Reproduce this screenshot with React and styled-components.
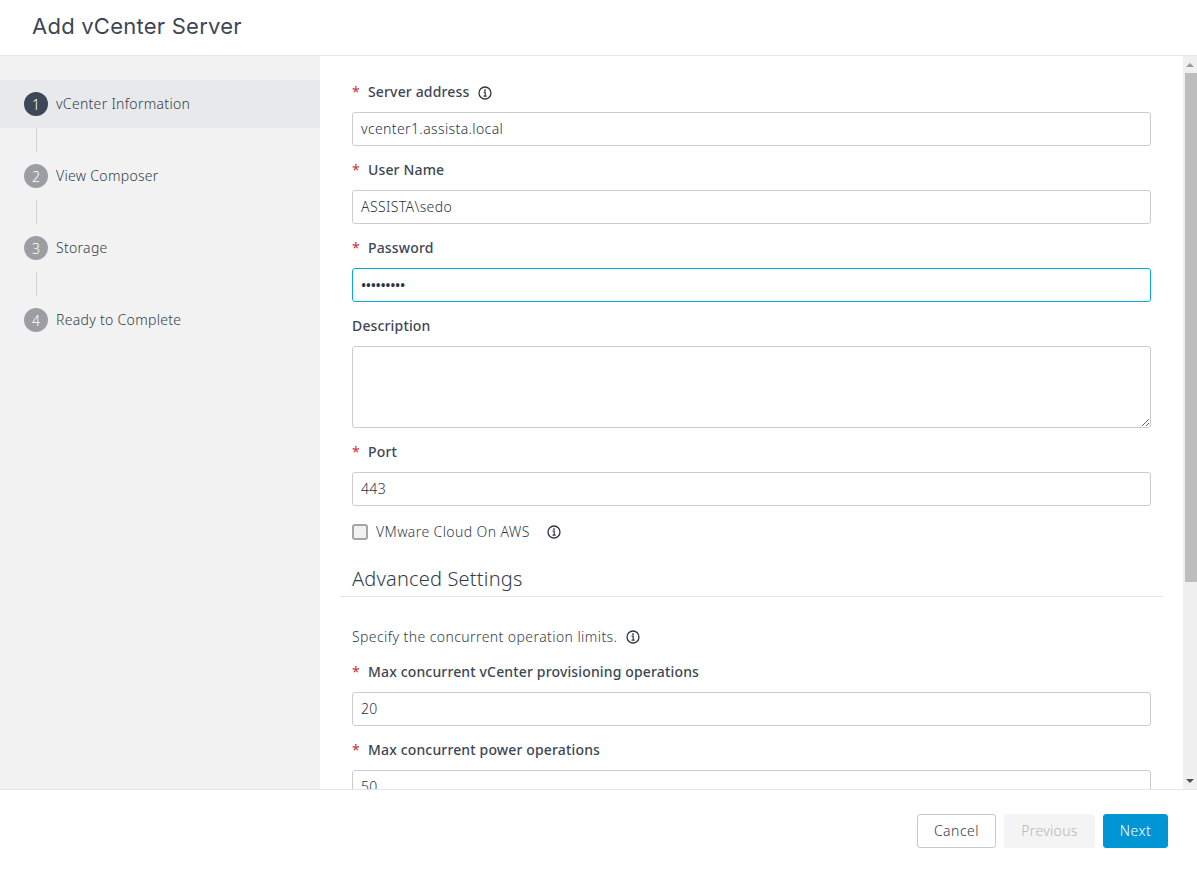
import React from 'react';
import styled, { createGlobalStyle } from 'styled-components';

const GlobalStyle = createGlobalStyle`
    html, body {
        margin: 0;
        padding: 0;
        height: 100%;
        background: #fff;
    }
    body {
        font-family: 'Noto Sans', 'Open Sans', sans-serif;
        font-size: 14px;
        font-weight: 300;
        color: #333d4a;
    }
`;

const Page = styled.div`
    display: flex;
    flex-direction: column;
    width: 1197px;
    height: 870px;
    overflow: hidden;
`;

const Header = styled.header`
    display: flex;
    align-items: center;
    flex: 0 0 56px;
    box-sizing: border-box;
    padding: 0 0 4px 32px;
    border-bottom: 1px solid #e6e6e6;
`;

const Title = styled.h1`
    margin: 0;
    font-family: 'Inter', 'Lato', sans-serif;
    font-size: 22px;
    font-weight: 400;
    letter-spacing: 0.24px;
    color: #3d4754;
`;

const Body = styled.div`
    display: flex;
    flex: 0 0 733px;
    min-height: 0;
`;

const Sidebar = styled.nav`
    flex: 0 0 320px;
    box-sizing: border-box;
    padding-top: 24px;
    background: #f2f2f2;
`;

const Step = styled.div`
    display: flex;
    align-items: center;
    gap: 8px;
    height: 48px;
    padding-left: 24px;
    background: ${(p) => (p.$active ? '#e8e9eb' : 'transparent')};
`;

const StepName = styled.span`
    padding-bottom: 2px;
    letter-spacing: 0.3px;
`;

const StepNumber = styled.span`
    display: flex;
    align-items: center;
    justify-content: center;
    width: 24px;
    height: 24px;
    border-radius: 50%;
    font-size: 14px;
    color: #fff;
    background: ${(p) => (p.$active ? '#3c4858' : '#9b9ea3')};
`;

const Connector = styled.div`
    width: 1px;
    height: 24px;
    margin-left: 36px;
    background: #cfcfcf;
`;

const Main = styled.main`
    flex: 1;
    min-width: 0;
    box-sizing: border-box;
    padding: 26px 32px 0;
    overflow: hidden;
`;

const Field = styled.div`
    margin-bottom: 14px;
`;

const Label = styled.div`
    display: flex;
    align-items: center;
    height: 20px;
    margin-bottom: 10px;
    font-weight: 500;
    letter-spacing: 0.15px;
    color: #3d4754;
`;

const LabelText = styled.span`
    padding-bottom: 2px;
`;

const LabelInfo = styled.span`
    display: flex;
    padding-top: 2px;
`;

const Star = styled.span`
    width: 16px;
    padding-bottom: 2px;
    color: #c9304a;
    font-weight: 400;
`;

const TextInput = styled.input`
    display: block;
    width: 100%;
    height: 34px;
    box-sizing: border-box;
    padding: 0 8px 2px;
    border: 1px solid ${(p) => (p.$focused ? '#0aa8e0' : '#cccccc')};
    border-radius: 3px;
    outline: none;
    font-family: inherit;
    font-size: 14px;
    font-weight: ${(p) => (p.type === 'password' ? 500 : 300)};
    letter-spacing: ${(p) => (p.type === 'password' ? '-0.4px' : '0.38px')};
    color: #2a333f;
    background: #fff;
`;

const TextArea = styled.textarea`
    display: block;
    width: 100%;
    height: 82px;
    box-sizing: border-box;
    padding: 8px;
    border: 1px solid #cccccc;
    border-radius: 3px;
    outline: none;
    font-family: inherit;
    font-size: 14px;
`;

const CheckRow = styled.label`
    display: flex;
    align-items: center;
    height: 24px;
`;

const CheckText = styled.span`
    padding-bottom: 2px;
    letter-spacing: 0.4px;
`;

const CheckBox = styled.span`
    width: 16px;
    height: 16px;
    margin-right: 8px;
    box-sizing: border-box;
    border: 2px solid #a6a6a6;
    border-radius: 3px;
    background: #f2f2f2;
`;

const SectionTitle = styled.h2`
    margin: 20px -12px 0;
    padding: 0 12px 2px;
    border-bottom: 1px solid #e6e6e6;
    font-size: 20px;
    line-height: 30px;
    font-weight: 300;
    letter-spacing: 0.18px;
    color: #333d4a;
`;

const Hint = styled.div`
    display: flex;
    align-items: center;
    height: 20px;
    margin: 30px 0 15px;
`;

const HintText = styled.span`
    padding-bottom: 2px;
    letter-spacing: 0.42px;
`;

const InfoSvg = styled.svg`
    flex: none;
    width: 14px;
    height: 14px;
    margin-left: ${(p) => p.$gap}px;
    color: #2f3640;
`;

const ScrollBar = styled.div`
    display: flex;
    flex-direction: column;
    flex: 0 0 14px;
    background: #f0f0f0;
`;

const ScrollButton = styled.div`
    display: flex;
    align-items: center;
    justify-content: center;
    flex: 0 0 17px;
`;

const ArrowUp = styled.span`
    border-left: 4px solid transparent;
    border-right: 4px solid transparent;
    border-bottom: 4px solid #9a9a9a;
`;

const ArrowDown = styled.span`
    border-left: 4px solid transparent;
    border-right: 4px solid transparent;
    border-top: 4px solid #505050;
`;

const ScrollTrack = styled.div`
    flex: 1;
`;

const ScrollThumb = styled.div`
    height: 509px;
    margin-left: 2px;
    background: #bdbdbd;
`;

const Footer = styled.footer`
    display: flex;
    align-items: flex-start;
    justify-content: flex-end;
    gap: 8px;
    flex: 1;
    box-sizing: border-box;
    padding: 24px 29px 0 0;
    border-top: 1px solid #e6e6e6;
`;

const Button = styled.button`
    height: 34px;
    width: ${(p) => p.$width}px;
    padding: 0 0 2px;
    box-sizing: border-box;
    border: 1px solid #c8c8c8;
    border-radius: 3px;
    font-family: inherit;
    font-size: 14px;
    font-weight: 300;
    letter-spacing: 0.5px;
    color: #333d4a;
    background: #fff;

    &:disabled {
        border-color: #f4f4f4;
        letter-spacing: 0.3px;
        color: #b4b4b4;
        background: #f4f4f4;
    }
`;

const PrimaryButton = styled(Button)`
    border-color: #0095d3;
    color: #fff;
    background: #0095d3;
`;

const steps = ['vCenter Information', 'View Composer', 'Storage', 'Ready to Complete'];

function InfoIcon({ gap }) {
    return (
        <InfoSvg $gap={gap} viewBox="0 0 14 14" fill="none" stroke="currentColor">
            <circle cx="7" cy="7" r="6" strokeWidth="1.3" />
            <path d="M5.6 6.2H7.2V10.2M5.5 10.2H8.7" strokeWidth="1.2" />
            <rect x="6.2" y="3.4" width="1.6" height="1.5" fill="currentColor" stroke="none" />
        </InfoSvg>
    );
}

function TextField({ label, value, required = true, info, type = 'text', focused }) {
    return (
        <Field>
            <Label>
                {required && <Star>*</Star>}
                <LabelText>{label}</LabelText>
                {info && <LabelInfo><InfoIcon gap={9} /></LabelInfo>}
            </Label>
            <TextInput type={type} value={value} readOnly $focused={focused} />
        </Field>
    );
}

export default function App() {
    return (
        <Page>
            <GlobalStyle />
            <Header>
                <Title>Add vCenter Server</Title>
            </Header>
            <Body>
                <Sidebar>
                    {steps.map((step, i) => (
                        <React.Fragment key={step}>
                            {i > 0 && <Connector />}
                            <Step $active={i === 0}>
                                <StepNumber $active={i === 0}>{i + 1}</StepNumber>
                                <StepName>{step}</StepName>
                            </Step>
                        </React.Fragment>
                    ))}
                </Sidebar>
                <Main>
                    <TextField label="Server address" value="vcenter1.assista.local" info />
                    <TextField label="User Name" value="ASSISTA\sedo" />
                    <TextField label="Password" value="123456789" type="password" focused />
                    <Field>
                        <Label><LabelText>Description</LabelText></Label>
                        <TextArea readOnly value="" />
                    </Field>
                    <TextField label="Port" value="443" />
                    <CheckRow>
                        <CheckBox />
                        <CheckText>VMware Cloud On AWS</CheckText>
                        <InfoIcon gap={17} />
                    </CheckRow>
                    <SectionTitle>Advanced Settings</SectionTitle>
                    <Hint>
                        <HintText>Specify the concurrent operation limits.</HintText>
                        <InfoIcon gap={9} />
                    </Hint>
                    <TextField label="Max concurrent vCenter provisioning operations" value="20" />
                    <TextField label="Max concurrent power operations" value="50" />
                </Main>
                <ScrollBar>
                    <ScrollButton><ArrowUp /></ScrollButton>
                    <ScrollTrack><ScrollThumb /></ScrollTrack>
                    <ScrollButton><ArrowDown /></ScrollButton>
                </ScrollBar>
            </Body>
            <Footer>
                <Button $width={79}>Cancel</Button>
                <Button $width={91} disabled>Previous</Button>
                <PrimaryButton $width={65}>Next</PrimaryButton>
            </Footer>
        </Page>
    );
}
